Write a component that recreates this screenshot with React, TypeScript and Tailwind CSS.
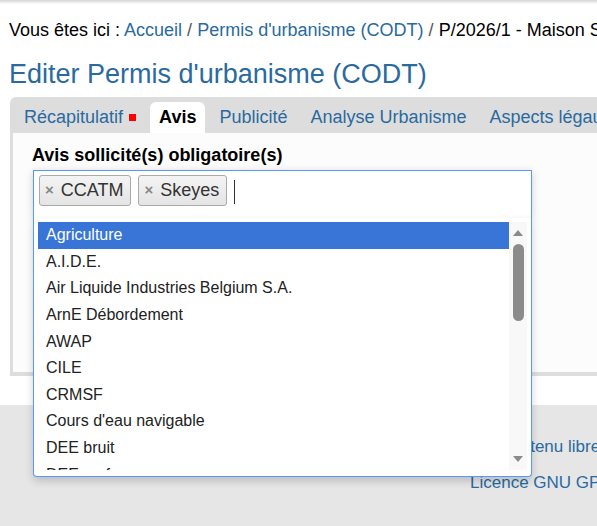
const tabs = ["Récapitulatif", "Avis", "Publicité", "Analyse Urbanisme", "Aspects légaux"];

const options = [
    "Agriculture",
    "A.I.D.E.",
    "Air Liquide Industries Belgium S.A.",
    "ArnE Débordement",
    "AWAP",
    "CILE",
    "CRMSF",
    "Cours d'eau navigable",
    "DEE bruit",
    "DEE surface",
];

function Tag({ label }: { label: string }) {
    return (
        <span className="flex h-[31px] items-center rounded-[3px] border border-[#aaaaaa] bg-linear-to-b from-[#f4f4f4] to-[#e4e4e4] pl-[5px] pr-[7px] text-[18px] text-[#333]">
            <span className="mr-[7px] text-[15px] font-bold text-[#888]">×</span>
            {label}
        </span>
    );
}

function Scrollbar() {
    return (
        <div className="flex w-[18px] flex-col items-center bg-[#f8f8f8] pt-[8px]">
            <svg width="10" height="6" viewBox="0 0 10 6">
                <path d="M5 0 L10 6 L0 6 Z" fill="#8a8a8a" />
            </svg>
            <div className="mt-[8px] h-[77px] w-[11px] rounded-full bg-[#8b8b8b]" />
            <div className="flex-1" />
            <svg width="10" height="6" viewBox="0 0 10 6" className="mb-[8px]">
                <path d="M0 0 L10 0 L5 6 Z" fill="#8a8a8a" />
            </svg>
        </div>
    );
}

export default function App() {
    return (
        <div className="relative h-[526px] w-[597px] overflow-hidden whitespace-nowrap bg-white font-['Liberation_Sans',Arial,sans-serif]">
            <div className="h-[4px] bg-linear-to-b from-[#d4d4d4] to-white" />

            <div className="pl-[9px]">
                <p className="mt-[16px] text-[18px] leading-[20px] text-black">
                    Vous êtes ici :{" "}
                    <span className="text-[#2a6aa0]">Accueil</span>
                    <span className="text-[#555]"> / </span>
                    <span className="text-[#2a6aa0]">Permis d'urbanisme (CODT)</span>
                    <span className="text-[#555]"> / </span>
                    P/2026/1 - Maison Sur la colline
                </p>

                <h1 className="mt-[19px] text-[27px] leading-[30px] text-[#2a6aa0]">
                    Editer Permis d'urbanisme (CODT)
                </h1>

                <div className="ml-[1px] mt-[8px]">
                    <div className="flex h-[36px] items-end rounded-tl-[6px] bg-[#dddddd] pl-[5px]">
                        {tabs.map((t, i) =>
                            i === 1 ? (
                                <span
                                    key={t}
                                    className="mr-[5px] flex h-[31px] items-center rounded-t-[6px] bg-white px-[9px] text-[18px] font-bold text-black"
                                >
                                    {t}
                                </span>
                            ) : (
                                <span
                                    key={t}
                                    className="mr-[5px] flex h-[31px] items-center px-[9px] text-[18px] text-[#2a6aa0]"
                                >
                                    {t}
                                    {i === 0 && (
                                        <span className="ml-[6px] inline-block h-[7px] w-[7px] bg-[#ff0000]" />
                                    )}
                                </span>
                            )
                        )}
                    </div>

                    <div className="h-[243px] border-b-[4px] border-l-[3px] border-[#dddddd] bg-[#fcfcfc] pl-[19px] pt-[12px]">
                        <label className="block text-[18px] font-bold leading-[20px] text-black">
                            Avis sollicité(s) obligatoire(s)
                        </label>

                        <div className="relative z-10 ml-[1px] mt-[5px] w-[499px] shadow-[0_2px_8px_rgba(0,0,0,0.18)]">
                            <div className="flex h-[48px] items-start gap-[7px] border border-b-0 border-[#5897fb] bg-white pl-[5px] pt-[4px]">
                                <Tag label="CCATM" />
                                <Tag label="Skeyes" />
                                <span className="mt-[5px] h-[24px] w-px bg-[#333]" />
                            </div>

                            <div className="absolute left-0 top-full w-full rounded-b-[4px] border border-t-0 border-[#5897fb] bg-white px-[4px] pb-[6px] shadow-[0_4px_8px_rgba(0,0,0,0.18)]">
                                <div className="flex h-[252px] border-t-[4px] border-transparent">
                                    <ul className="flex-1 overflow-hidden">
                                        {options.map((o, i) => (
                                            <li
                                                key={o}
                                                className={
                                                    i === 0
                                                        ? "flex h-[26.6px] items-center bg-[#3875d7] px-[8px] text-[16px] text-white"
                                                        : "flex h-[26.6px] items-center px-[8px] text-[16px] text-[#222]"
                                                }
                                            >
                                                {o}
                                            </li>
                                        ))}
                                    </ul>
                                    <Scrollbar />
                                </div>
                            </div>
                        </div>
                    </div>
                </div>
            </div>

            <footer className="mt-[29px] h-[200px] bg-[#e6e6e6] pt-[32px] text-[17px] leading-[20px] text-[#2a6aa0]">
                <p className="pl-[499px]">Contenu libre</p>
                <p className="mt-[16px] pl-[470px]">Licence GNU GPL</p>
            </footer>
        </div>
    );
}
